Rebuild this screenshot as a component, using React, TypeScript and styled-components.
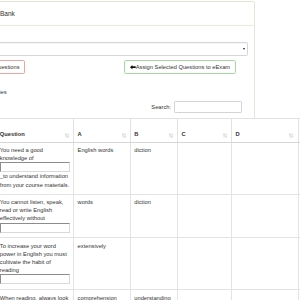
import React from 'react';
import styled, { createGlobalStyle } from 'styled-components';

// The screenshot is a crop of a scaled-down admin page (about 0.41x),
// so every size below is the bootstrap value times 0.41.

const GlobalStyle = createGlobalStyle`
  html, body {
    margin: 0;
    padding: 0;
    background: #fff;
    overflow: hidden;
  }
  body {
    font-family: 'Liberation Sans', Arial, Helvetica, sans-serif;
    font-size: 5.74px;
    line-height: 8.2px;
    color: #333;
  }
`;

const Page = styled.div`
  width: 321px;
  margin-left: -66px;
  padding-top: 1px;
`;

const Panel = styled.section`
  border: 1px solid #e0e9d3;
  border-radius: 2px;
  background: #fff;
`;

const PanelHeading = styled.header`
  padding: 6.8px 6px 6.8px 11.4px;
  border-bottom: 1px solid #e6ecdc;
  font-size: 6.56px;
  line-height: 9.4px;
`;

const PanelBody = styled.div`
  padding: 6px;
`;

const FieldLabel = styled.label`
  display: block;
  width: fit-content;
  font-weight: bold;
  margin-bottom: 2px;
`;

const SelectBox = styled.div<{ $width?: number; $height: number }>`
  display: flex;
  align-items: center;
  justify-content: space-between;
  box-sizing: border-box;
  width: ${p => (p.$width ? `${p.$width}px` : '100%')};
  height: ${p => p.$height}px;
  padding: 0 2.5px;
  border: 1px solid #d6d6d6;
  border-radius: 1.6px;
  background: #fff;
  box-shadow: inset 0 0.4px 0.4px rgba(0, 0, 0, 0.075);
`;

const Caret = styled.span`
  width: 0;
  height: 0;
  margin-left: auto;
  border-left: 1.3px solid transparent;
  border-right: 1.3px solid transparent;
  border-top: 2px solid #222;
`;

const FormGroup = styled.div`
  margin-bottom: 4px;
`;

const ButtonRow = styled.div`
  display: flex;
  justify-content: space-between;
  padding-right: 12px;
`;

const Button = styled.button<{ $tone: 'danger' | 'success' }>`
  display: inline-flex;
  align-items: center;
  box-sizing: border-box;
  height: 14px;
  padding: 0 4.9px;
  border: 1px solid ${p => (p.$tone === 'danger' ? '#eea3a3' : '#a6d9a2')};
  border-radius: 1.6px;
  background: #fff;
  color: #333;
  font-family: inherit;
  font-size: 5.74px;
  line-height: 8.2px;
  white-space: nowrap;
`;

const LengthRow = styled.div`
  display: flex;
  align-items: center;
  height: 12.3px;
  margin-top: 12px;
`;

const LengthSelect = styled(SelectBox)`
  margin: 0 1.6px;
`;

const FilterRow = styled.div`
  display: flex;
  justify-content: flex-end;
  align-items: center;
  margin-top: 2.7px;
  padding-right: 6px;
`;

const SearchInput = styled.input`
  box-sizing: border-box;
  width: 68px;
  height: 11.5px;
  margin: 0 0 0 2.9px;
  padding: 0 2px;
  border: 1px solid #d4d4d4;
  border-radius: 1.2px;
  font-size: 5.74px;
  outline: none;
`;

const Table = styled.table`
  margin-top: 5px;
  border-collapse: collapse;
  table-layout: fixed;
  width: 426.7px;
  background: #fff;
`;

const HeadRow = styled.tr`
  height: 24px;
`;

const Th = styled.th`
  position: relative;
  padding: 3.3px 12px 3.3px 3.3px;
  border: 1px solid #e2e2e2;
  border-bottom-color: #d6d6d6;
  text-align: left;
  vertical-align: bottom;
  font-weight: bold;
  background: #fff;
`;

const SortMark = styled.svg`
  position: absolute;
  right: 4px;
  bottom: 4.2px;
  width: 4.2px;
  height: 5px;
`;

const Td = styled.td`
  padding: 3.3px 3.3px 4.8px;
  border: 1px solid #e3e3e3;
  vertical-align: top;
  background: #fff;
`;

const Blank = styled.input`
  display: block;
  box-sizing: border-box;
  width: 100%;
  height: 10px;
  margin: 0;
  padding: 0;
  border: 1px solid #d9d9d9;
  border-top-color: #8c8c8c;
  border-left-color: #8c8c8c;
  background: #fff;
  outline: none;
`;

const Check = styled.span`
  display: inline-block;
  width: 5px;
  height: 5px;
  border: 0.6px solid #888;
  border-radius: 1px;
  background: #fff;
`;

const SortIcon = () => (
  <SortMark viewBox="0 0 10 12" aria-hidden>
    <g fill="none" stroke="#333" strokeWidth="1.5" opacity="0.28">
      <path d="M2.5 11V1.8M0.6 4L2.5 1.4L4.4 4" />
      <path d="M7.5 1V10.2M5.6 8L7.5 10.6L9.4 8" />
    </g>
  </SortMark>
);

const ArrowLeft = () => (
  <svg width="5.7" height="4.4" viewBox="0 0 13 10" aria-hidden>
    <polygon points="0,5 5.5,0 5.5,3 13,3 13,7 5.5,7 5.5,10" fill="#111" />
  </svg>
);

type Question = {
  id: number;
  before: string;
  after?: string;
  a: string;
  b: string;
  c: string;
  d: string;
  answer: string;
};

const questions: Question[] = [
  {
    id: 1,
    before: 'You need a good knowledge of',
    after: '_to understand information from your course materials.',
    a: 'English words',
    b: 'diction',
    c: '',
    d: '',
    answer: 'A',
  },
  {
    id: 2,
    before: 'You cannot listen, speak, read or write English effectively without',
    a: 'words',
    b: 'diction',
    c: '',
    d: '',
    answer: 'A',
  },
  {
    id: 3,
    before: 'To increase your word power in English you must cultivate the habit of reading',
    a: 'extensively',
    b: '',
    c: '',
    d: '',
    answer: 'A',
  },
  {
    id: 4,
    before: 'When reading, always look for the main idea of the passage for better',
    a: 'comprehension',
    b: 'understanding',
    c: '',
    d: '',
    answer: 'A',
  },
];

const columns = ['Question', 'A', 'B', 'C', 'D', 'Answer'];
const widths = [54.5, 77.8, 56.7, 47.3, 54, 66.4, 70];

export default function App() {
  return (
    <>
      <GlobalStyle />
      <Page>
        <Panel>
          <PanelHeading>Manage Question Bank</PanelHeading>
          <PanelBody>
            <FormGroup>
              <FieldLabel>Course:</FieldLabel>
              <SelectBox $height={14}>
                <Caret />
              </SelectBox>
            </FormGroup>

            <ButtonRow>
              <Button $tone="danger">Remove Selected Questions</Button>
              <Button $tone="success">
                <ArrowLeft />
                Assign Selected Questions to eExam
              </Button>
            </ButtonRow>

            <LengthRow>
              Show
              <LengthSelect $width={30.75} $height={12.3}>
                10
                <Caret />
              </LengthSelect>
              entries
            </LengthRow>

            <FilterRow>
              Search:
              <SearchInput type="search" />
            </FilterRow>

            <Table>
              <colgroup>
                {widths.map((w, i) => (
                  <col key={i} style={{ width: w }} />
                ))}
              </colgroup>
              <thead>
                <HeadRow>
                  <Th>
                    <Check />
                  </Th>
                  {columns.map(c => (
                    <Th key={c}>
                      {c}
                      <SortIcon />
                    </Th>
                  ))}
                </HeadRow>
              </thead>
              <tbody>
                {questions.map(q => (
                  <tr key={q.id}>
                    <Td>
                      <Check />
                    </Td>
                    <Td>
                      {q.before}
                      <Blank type="text" />
                      {q.after}
                    </Td>
                    <Td>{q.a}</Td>
                    <Td>{q.b}</Td>
                    <Td>{q.c}</Td>
                    <Td>{q.d}</Td>
                    <Td>{q.answer}</Td>
                  </tr>
                ))}
              </tbody>
            </Table>
          </PanelBody>
        </Panel>
      </Page>
    </>
  );
}
